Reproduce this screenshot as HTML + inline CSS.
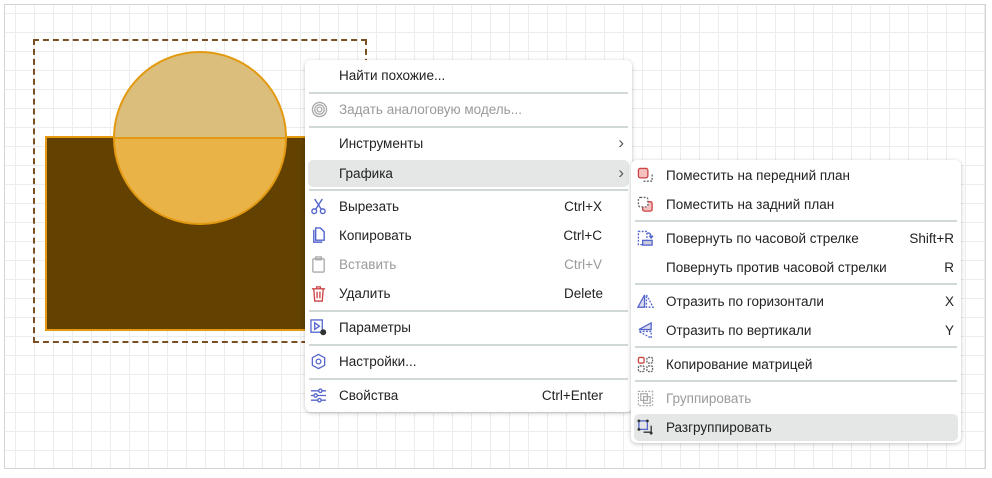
<!DOCTYPE html>
<html><head><meta charset="utf-8"><style>
*{margin:0;padding:0;box-sizing:border-box}
body{width:992px;height:478px;background:#fff;font-family:"Liberation Sans",sans-serif;font-size:13.5px;color:#222;position:relative;overflow:hidden}
.frame{position:absolute;left:4px;top:4px;width:982px;height:465px;border:1px solid #d4d4d4;
background-image:linear-gradient(#ececec 1px,transparent 1px),linear-gradient(90deg,#ececec 1px,transparent 1px);background-size:19px 19px;background-position:10px 8px}
.abs{position:absolute}
.menu{position:absolute;background:#fff;border-radius:6px;box-shadow:0 1px 4px rgba(0,0,0,.25)}
.it{position:absolute;left:0;right:0;height:27px;line-height:27px}
.it .t{position:absolute}
.it .k{position:absolute;text-align:right}
.chev{font-size:17px;color:#555;top:-1px}
.hl{background:#e5e7e7;border-radius:5px;left:3px;right:3px}
.sep{position:absolute;left:4px;right:4px;height:2px;background:#d0d8d8}
.dis{color:#9a9a9a}
.ic{position:absolute;top:5px;width:17px;height:17px}
</style></head><body>
<div class="frame"></div>
<div class="abs" style="left:33px;top:39px;width:334px;height:304px;border:2px dashed #7a4f22"></div>
<div class="abs" style="left:45px;top:136px;width:270px;height:195px;background:#634100;border:2px solid #e59a12"></div>
<svg class="abs" style="left:110px;top:49px" width="180" height="180">
<path d="M4 89 A86 86 0 0 1 176 89 Z" fill="#dbbd7c"/>
<path d="M4 89 A86 86 0 0 0 176 89 Z" fill="#e9b348"/>
<circle cx="90" cy="89" r="86" fill="none" stroke="#e39a10" stroke-width="2"/>
<line x1="4" y1="89" x2="176" y2="89" stroke="#e39a10" stroke-width="2"/>
</svg>

<div class="menu" style="left:305px;top:60px;width:327px;height:352px">
<div class="it" style="top:2px"><span class="t" style="left:34px">Найти похожие...</span></div>
<div class="sep" style="top:32px"></div>
<div class="it dis" style="top:36px"><svg class="ic" style="left:6px" viewBox="0 0 18 18" fill="none" stroke="#aaa" stroke-width="1.4"><circle cx="9" cy="9" r="7.5"/><circle cx="9" cy="9" r="5"/><circle cx="9" cy="9" r="2.5"/></svg><span class="t" style="left:34px">Задать аналоговую модель...</span></div>
<div class="sep" style="top:66px"></div>
<div class="it" style="top:70px"><span class="t" style="left:34px">Инструменты</span><span class="k chev" style="right:8px">›</span></div>
<div class="it hl" style="top:100px"><span class="t" style="left:31px">Графика</span><span class="k chev" style="right:5px">›</span></div>
<div class="sep" style="top:129px"></div>
<div class="it" style="top:133px"><svg class="ic" style="left:5px" viewBox="0 0 18 18" fill="none" stroke="#5566cc" stroke-width="1.5"><path d="M5 1 L12 12 M13 1 L6 12"/><circle cx="4.5" cy="14" r="2.5"/><circle cx="13.5" cy="14" r="2.5"/></svg><span class="t" style="left:34px">Вырезать</span><span class="k" style="right:30px">Ctrl+X</span></div>
<div class="it" style="top:162px"><svg class="ic" style="left:5px" viewBox="0 0 18 18" fill="none" stroke="#5566cc" stroke-width="1.5"><path d="M4 3 V16 H13 M6 1 H11 L15 5 V14 H6 Z"/></svg><span class="t" style="left:34px">Копировать</span><span class="k" style="right:30px">Ctrl+C</span></div>
<div class="it dis" style="top:191px"><svg class="ic" style="left:5px" viewBox="0 0 18 18" fill="none" stroke="#aaa" stroke-width="1.4"><rect x="3" y="3" width="12" height="14" rx="1"/><rect x="6" y="1" width="6" height="3"/></svg><span class="t" style="left:34px">Вставить</span><span class="k" style="right:30px">Ctrl+V</span></div>
<div class="it" style="top:220px"><svg class="ic" style="left:5px" viewBox="0 0 18 18" fill="none" stroke="#cc4444" stroke-width="1.4"><path d="M2 4 H16 M7 4 V2 H11 V4 M4 4 L5 17 H13 L14 4 M7.5 7 V14 M10.5 7 V14"/></svg><span class="t" style="left:34px">Удалить</span><span class="k" style="right:29px">Delete</span></div>
<div class="sep" style="top:250px"></div>
<div class="it" style="top:254px"><svg class="ic" style="left:5px" viewBox="0 0 18 18" fill="none" stroke="#5566cc" stroke-width="1.4"><rect x="1" y="1" width="12" height="13"/><path d="M5 4 L10 7.5 L5 11 Z"/><circle cx="14" cy="14" r="2.5" fill="#333" stroke="#333"/></svg><span class="t" style="left:34px">Параметры</span></div>
<div class="sep" style="top:284px"></div>
<div class="it" style="top:288px"><svg class="ic" style="left:5px" viewBox="0 0 18 18" fill="none" stroke="#5566cc" stroke-width="1.4"><path d="M9 1.5 L15.5 5 V13 L9 16.5 L2.5 13 V5 Z"/><circle cx="9" cy="9" r="2.5"/></svg><span class="t" style="left:34px">Настройки...</span></div>
<div class="sep" style="top:318px"></div>
<div class="it" style="top:322px"><svg class="ic" style="left:5px" viewBox="0 0 18 18" fill="none" stroke="#5566cc" stroke-width="1.4"><path d="M1 4 H17 M1 9 H17 M1 14 H17"/><circle cx="11" cy="4" r="1.8" fill="#fff"/><circle cx="6" cy="9" r="1.8" fill="#fff"/><circle cx="10" cy="14" r="1.8" fill="#fff"/></svg><span class="t" style="left:34px">Свойства</span><span class="k" style="right:29px">Ctrl+Enter</span></div>
</div>

<div class="menu" style="left:631px;top:160px;width:330px;height:283px">
<div class="it" style="top:2px"><svg class="ic" style="left:6px" viewBox="0 0 18 18" fill="none" stroke-width="1.4"><path d="M7 15 H16 V7" stroke="#666" stroke-dasharray="2 1.5"/><rect x="1.5" y="1.5" width="10" height="10" rx="2" fill="#f5c0c0" stroke="#cc4444"/></svg><span class="t" style="left:35px">Поместить на передний план</span></div>
<div class="it" style="top:31px"><svg class="ic" style="left:6px" viewBox="0 0 18 18" fill="none" stroke-width="1.4"><rect x="6" y="6" width="10" height="10" rx="2" fill="#f5c0c0" stroke="#cc4444"/><rect x="1.5" y="1.5" width="10" height="10" rx="2" fill="#fff" stroke="#666" stroke-dasharray="2 1.5"/></svg><span class="t" style="left:35px">Поместить на задний план</span></div>
<div class="sep" style="top:60px"></div>
<div class="it" style="top:65px"><svg class="ic" style="left:6px" viewBox="0 0 18 18" fill="none" stroke="#5566cc" stroke-width="1.4"><rect x="1.5" y="1.5" width="9" height="14" stroke-dasharray="2 1.5"/><rect x="6" y="11" width="10" height="5" fill="#ccd" /><path d="M11 3 Q15 3 15 8 M13 6 L15 8.5 L17 6"/></svg><span class="t" style="left:35px">Повернуть по часовой стрелке</span><span class="k" style="right:7px">Shift+R</span></div>
<div class="it" style="top:94px"><span class="t" style="left:35px">Повернуть против часовой стрелки</span><span class="k" style="right:7px">R</span></div>
<div class="sep" style="top:123px"></div>
<div class="it" style="top:128px"><svg class="ic" style="left:6px" viewBox="0 0 18 18" fill="none" stroke="#5566cc" stroke-width="1.4"><path d="M8 2 L1 15 H8 Z" fill="#dde"/><path d="M10 2 L17 15 H10 Z" stroke-dasharray="2 1.5"/></svg><span class="t" style="left:35px">Отразить по горизонтали</span><span class="k" style="right:7px">X</span></div>
<div class="it" style="top:157px"><svg class="ic" style="left:6px" viewBox="0 0 18 18" fill="none" stroke="#5566cc" stroke-width="1.4"><path d="M15 1 L2 8 H15 Z" fill="#dde"/><path d="M15 10 L2 10 L15 17 Z" stroke-dasharray="2 1.5"/></svg><span class="t" style="left:35px">Отразить по вертикали</span><span class="k" style="right:7px">Y</span></div>
<div class="sep" style="top:186px"></div>
<div class="it" style="top:191px"><svg class="ic" style="left:6px" viewBox="0 0 18 18" fill="none" stroke-width="1.4"><rect x="1.5" y="1.5" width="6" height="6" rx="1.5" stroke="#cc4444"/><rect x="10.5" y="1.5" width="6" height="6" rx="1.5" stroke="#666" stroke-dasharray="2 1"/><rect x="1.5" y="10.5" width="6" height="6" rx="1.5" stroke="#666" stroke-dasharray="2 1"/><rect x="10.5" y="10.5" width="6" height="6" rx="1.5" stroke="#666" stroke-dasharray="2 1"/></svg><span class="t" style="left:35px">Копирование матрицей</span></div>
<div class="sep" style="top:220px"></div>
<div class="it dis" style="top:225px"><svg class="ic" style="left:6px" viewBox="0 0 18 18" fill="none" stroke="#aaa" stroke-width="1.3"><rect x="1.5" y="1.5" width="15" height="15" stroke-dasharray="2 1.5"/><rect x="4" y="4" width="7" height="7"/><rect x="7" y="7" width="7" height="7"/></svg><span class="t" style="left:35px">Группировать</span></div>
<div class="it hl" style="top:254px"><svg class="ic" style="left:3px" viewBox="0 0 18 18" fill="none" stroke-width="1.4"><rect x="2" y="2" width="9" height="9" stroke="#5566cc"/><path d="M7 14 H15 V7" stroke="#333"/><circle cx="2" cy="2" r="1.5" fill="#333"/><circle cx="11" cy="2" r="1.5" fill="#333"/><circle cx="2" cy="11" r="1.5" fill="#333"/><circle cx="15" cy="15" r="1.5" fill="#333"/></svg><span class="t" style="left:32px">Разгруппировать</span></div>
</div>
</body></html>
